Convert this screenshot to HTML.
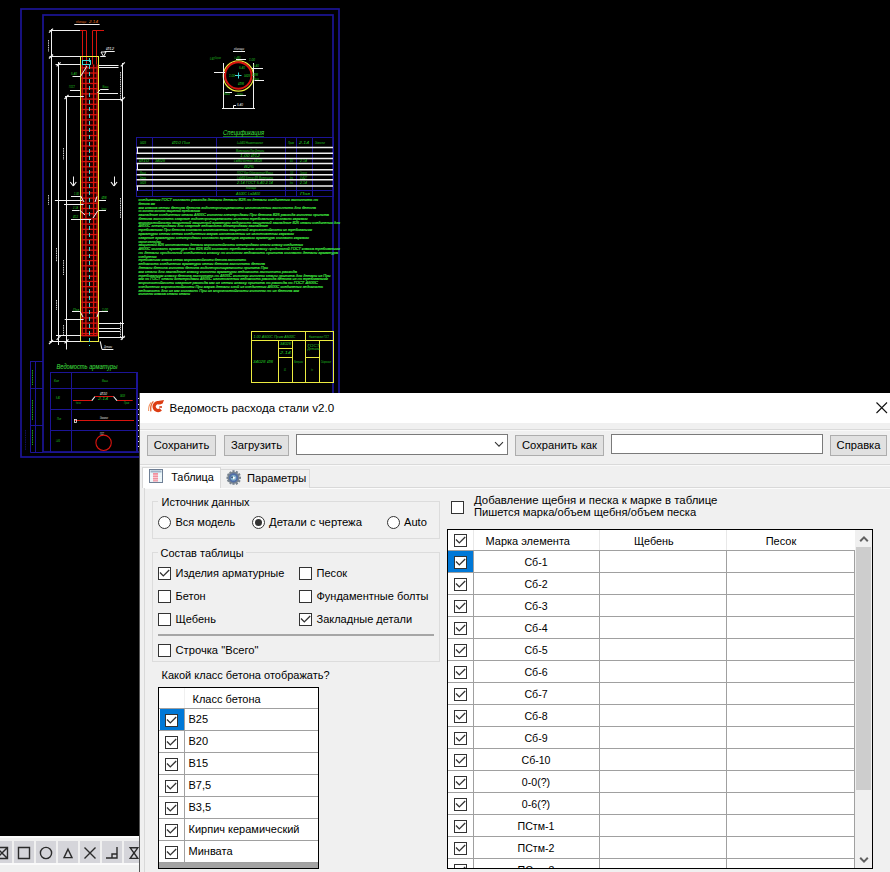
<!DOCTYPE html>
<html><head><meta charset="utf-8">
<style>
*{margin:0;padding:0;box-sizing:border-box}
html,body{width:890px;height:872px;overflow:hidden;background:#000}
body{position:relative;font-family:"Liberation Sans",sans-serif;font-size:11px;color:#000}
.a{position:absolute}
.t{position:absolute;white-space:nowrap;line-height:1}
#cad{position:absolute;left:0;top:0}
.cb{position:absolute;width:13px;height:13px;border:1px solid #333;background:#fff}
.cb svg{left:-1px !important;top:-1px !important}
.rb{position:absolute;width:13px;height:13px;border:1px solid #333;border-radius:50%;background:#fff}
.btn{position:absolute;background:#e1e1e1;border:1px solid #adadad}
</style></head><body>
<svg id="cad" width="890" height="872" viewBox="0 0 890 872" shape-rendering="auto"><rect x="21" y="9" width="318" height="448" stroke="#1c1496" stroke-width="1.7" fill="none"/><rect x="43" y="15" width="290" height="437" stroke="#1c1496" stroke-width="1.7" fill="none"/><rect x="81.5" y="64.4" width="16" height="271.6" fill="#1a0000"/><line x1="82.2" y1="64.4" x2="82.2" y2="336" stroke="#d8140e" stroke-width="1.35"/><line x1="85.9" y1="64.4" x2="85.9" y2="336" stroke="#d8140e" stroke-width="1.35"/><line x1="93.6" y1="64.4" x2="93.6" y2="336" stroke="#d8140e" stroke-width="1.35"/><line x1="97.1" y1="64.4" x2="97.1" y2="336" stroke="#d8140e" stroke-width="1.35"/><line x1="81.5" y1="67.83" x2="97.5" y2="67.83" stroke="#d8140e" stroke-width="1.3"/><line x1="81.5" y1="73.04" x2="97.5" y2="73.04" stroke="#d8140e" stroke-width="1.3"/><line x1="81.5" y1="78.25" x2="97.5" y2="78.25" stroke="#d8140e" stroke-width="1.3"/><line x1="81.5" y1="83.46" x2="97.5" y2="83.46" stroke="#d8140e" stroke-width="1.3"/><line x1="81.5" y1="88.67" x2="97.5" y2="88.67" stroke="#d8140e" stroke-width="1.3"/><line x1="81.5" y1="93.88" x2="97.5" y2="93.88" stroke="#d8140e" stroke-width="1.3"/><line x1="81.5" y1="99.09" x2="97.5" y2="99.09" stroke="#d8140e" stroke-width="1.3"/><line x1="81.5" y1="104.30" x2="97.5" y2="104.30" stroke="#d8140e" stroke-width="1.3"/><line x1="81.5" y1="109.51" x2="97.5" y2="109.51" stroke="#d8140e" stroke-width="1.3"/><line x1="81.5" y1="114.72" x2="97.5" y2="114.72" stroke="#d8140e" stroke-width="1.3"/><line x1="81.5" y1="119.93" x2="97.5" y2="119.93" stroke="#d8140e" stroke-width="1.3"/><line x1="81.5" y1="125.14" x2="97.5" y2="125.14" stroke="#d8140e" stroke-width="1.3"/><line x1="81.5" y1="130.35" x2="97.5" y2="130.35" stroke="#d8140e" stroke-width="1.3"/><line x1="81.5" y1="135.56" x2="97.5" y2="135.56" stroke="#d8140e" stroke-width="1.3"/><line x1="81.5" y1="140.77" x2="97.5" y2="140.77" stroke="#d8140e" stroke-width="1.3"/><line x1="81.5" y1="145.98" x2="97.5" y2="145.98" stroke="#d8140e" stroke-width="1.3"/><line x1="81.5" y1="151.19" x2="97.5" y2="151.19" stroke="#d8140e" stroke-width="1.3"/><line x1="81.5" y1="156.40" x2="97.5" y2="156.40" stroke="#d8140e" stroke-width="1.3"/><line x1="81.5" y1="161.61" x2="97.5" y2="161.61" stroke="#d8140e" stroke-width="1.3"/><line x1="81.5" y1="166.82" x2="97.5" y2="166.82" stroke="#d8140e" stroke-width="1.3"/><line x1="81.5" y1="172.03" x2="97.5" y2="172.03" stroke="#d8140e" stroke-width="1.3"/><line x1="81.5" y1="177.24" x2="97.5" y2="177.24" stroke="#d8140e" stroke-width="1.3"/><line x1="81.5" y1="182.45" x2="97.5" y2="182.45" stroke="#d8140e" stroke-width="1.3"/><line x1="81.5" y1="187.66" x2="97.5" y2="187.66" stroke="#d8140e" stroke-width="1.3"/><line x1="81.5" y1="192.87" x2="97.5" y2="192.87" stroke="#d8140e" stroke-width="1.3"/><line x1="81.5" y1="198.08" x2="97.5" y2="198.08" stroke="#d8140e" stroke-width="1.3"/><line x1="81.5" y1="203.29" x2="97.5" y2="203.29" stroke="#d8140e" stroke-width="1.3"/><line x1="81.5" y1="208.50" x2="97.5" y2="208.50" stroke="#d8140e" stroke-width="1.3"/><line x1="81.5" y1="213.71" x2="97.5" y2="213.71" stroke="#d8140e" stroke-width="1.3"/><line x1="81.5" y1="218.92" x2="97.5" y2="218.92" stroke="#d8140e" stroke-width="1.3"/><line x1="81.5" y1="224.13" x2="97.5" y2="224.13" stroke="#d8140e" stroke-width="1.3"/><line x1="81.5" y1="229.34" x2="97.5" y2="229.34" stroke="#d8140e" stroke-width="1.3"/><line x1="81.5" y1="234.55" x2="97.5" y2="234.55" stroke="#d8140e" stroke-width="1.3"/><line x1="81.5" y1="239.76" x2="97.5" y2="239.76" stroke="#d8140e" stroke-width="1.3"/><line x1="81.5" y1="244.97" x2="97.5" y2="244.97" stroke="#d8140e" stroke-width="1.3"/><line x1="81.5" y1="250.18" x2="97.5" y2="250.18" stroke="#d8140e" stroke-width="1.3"/><line x1="81.5" y1="255.39" x2="97.5" y2="255.39" stroke="#d8140e" stroke-width="1.3"/><line x1="81.5" y1="260.60" x2="97.5" y2="260.60" stroke="#d8140e" stroke-width="1.3"/><line x1="81.5" y1="265.81" x2="97.5" y2="265.81" stroke="#d8140e" stroke-width="1.3"/><line x1="81.5" y1="271.02" x2="97.5" y2="271.02" stroke="#d8140e" stroke-width="1.3"/><line x1="81.5" y1="276.23" x2="97.5" y2="276.23" stroke="#d8140e" stroke-width="1.3"/><line x1="81.5" y1="281.44" x2="97.5" y2="281.44" stroke="#d8140e" stroke-width="1.3"/><line x1="81.5" y1="286.65" x2="97.5" y2="286.65" stroke="#d8140e" stroke-width="1.3"/><line x1="81.5" y1="291.86" x2="97.5" y2="291.86" stroke="#d8140e" stroke-width="1.3"/><line x1="81.5" y1="297.07" x2="97.5" y2="297.07" stroke="#d8140e" stroke-width="1.3"/><line x1="81.5" y1="302.28" x2="97.5" y2="302.28" stroke="#d8140e" stroke-width="1.3"/><line x1="81.5" y1="307.49" x2="97.5" y2="307.49" stroke="#d8140e" stroke-width="1.3"/><line x1="81.5" y1="312.70" x2="97.5" y2="312.70" stroke="#d8140e" stroke-width="1.3"/><line x1="81.5" y1="317.91" x2="97.5" y2="317.91" stroke="#d8140e" stroke-width="1.3"/><line x1="81.5" y1="323.12" x2="97.5" y2="323.12" stroke="#d8140e" stroke-width="1.3"/><line x1="81.5" y1="328.33" x2="97.5" y2="328.33" stroke="#d8140e" stroke-width="1.3"/><line x1="81.5" y1="333.54" x2="97.5" y2="333.54" stroke="#d8140e" stroke-width="1.3"/><line x1="81.5" y1="335.6" x2="97.5" y2="335.6" stroke="#d8140e" stroke-width="1.5"/><line x1="82.5" y1="30.7" x2="82.5" y2="64.4" stroke="#d8140e" stroke-width="1.0" /><line x1="86.5" y1="30.7" x2="86.5" y2="64.4" stroke="#d8140e" stroke-width="1.0" /><line x1="92.5" y1="30.7" x2="92.5" y2="64.4" stroke="#d8140e" stroke-width="1.0" /><line x1="96.5" y1="30.7" x2="96.5" y2="64.4" stroke="#d8140e" stroke-width="1.0" /><line x1="80" y1="30.5" x2="86.5" y2="30.5" stroke="#d8140e" stroke-width="1.0" /><line x1="92.5" y1="30.5" x2="104" y2="30.5" stroke="#d8140e" stroke-width="1.0" /><rect x="80.5" y="56.5" width="18.0" height="285.0" stroke="#ecec40" stroke-width="1.0" fill="none"/><line x1="89.5" y1="58" x2="89.5" y2="346" stroke="#40d8d8" stroke-width="1.0" stroke-dasharray="4 3"/><rect x="82.5" y="60.5" width="8.0" height="4.0" stroke="#40d8d8" stroke-width="1" fill="none"/><line x1="51.5" y1="29" x2="51.5" y2="342.5" stroke="#f0f0f0" stroke-width="1.0" /><line x1="58.5" y1="62" x2="58.5" y2="345" stroke="#f0f0f0" stroke-width="1.0" /><line x1="66.5" y1="97" x2="66.5" y2="349.5" stroke="#f0f0f0" stroke-width="1.0" /><line x1="122.5" y1="63" x2="122.5" y2="339.5" stroke="#f0f0f0" stroke-width="1.0" /><line x1="49.5" y1="30.5" x2="80" y2="30.5" stroke="#f0f0f0" stroke-width="1.0" /><line x1="49.5" y1="56.5" x2="80.4" y2="56.5" stroke="#f0f0f0" stroke-width="1.0" /><line x1="55.5" y1="64.5" x2="80.4" y2="64.5" stroke="#f0f0f0" stroke-width="1.0" /><line x1="99" y1="65.5" x2="118.5" y2="65.5" stroke="#f0f0f0" stroke-width="1.0" /><line x1="99" y1="67.5" x2="118.5" y2="67.5" stroke="#f0f0f0" stroke-width="1.0" /><line x1="99" y1="93.5" x2="118" y2="93.5" stroke="#f0f0f0" stroke-width="1.0" /><line x1="99" y1="99.5" x2="122.8" y2="99.5" stroke="#f0f0f0" stroke-width="1.0" /><line x1="70" y1="90.5" x2="80" y2="90.5" stroke="#f0f0f0" stroke-width="1.0" /><line x1="65" y1="96.5" x2="83.8" y2="96.5" stroke="#f0f0f0" stroke-width="1.0" /><line x1="74.3" y1="24.5" x2="99.6" y2="24.5" stroke="#f0f0f0" stroke-width="1.0" /><text x="76" y="23.07" font-family="Liberation Sans" font-style="italic" font-size="4.37" fill="#e07020" opacity="1.00" textLength="10" lengthAdjust="spacingAndGlyphs">единицы</text><text x="89" y="23.07" font-family="Liberation Sans" font-style="italic" font-size="4.37" fill="#e07020" opacity="1.00" textLength="9" lengthAdjust="spacingAndGlyphs">2.14</text><line x1="72.5" y1="76.5" x2="80.5" y2="76.5" stroke="#f0f0f0" stroke-width="1" /><line x1="80.5" y1="76.5" x2="87" y2="66" stroke="#f0f0f0" stroke-width="1" /><text x="71" y="75.48" font-family="Liberation Sans" font-style="italic" font-size="4.10" fill="#22c822" opacity="1.00" textLength="6" lengthAdjust="spacingAndGlyphs">5.40</text><line x1="100.2" y1="89.5" x2="108.6" y2="89.5" stroke="#f0f0f0" stroke-width="1" /><line x1="100.2" y1="89.6" x2="97.5" y2="93" stroke="#f0f0f0" stroke-width="1" /><text x="102.6" y="87.68" font-family="Liberation Sans" font-style="italic" font-size="4.10" fill="#22c822" opacity="1.00" textLength="5.7" lengthAdjust="spacingAndGlyphs">Масса</text><line x1="100.2" y1="56.5" x2="105.8" y2="56.5" stroke="#f0f0f0" stroke-width="1" /><text x="69" y="88.48" font-family="Liberation Sans" font-style="italic" font-size="4.10" fill="#22c822" opacity="1.00" textLength="6" lengthAdjust="spacingAndGlyphs">ГОСТ</text><line x1="104.6" y1="51.5" x2="114.7" y2="51.5" stroke="#f0f0f0" stroke-width="1" /><path d="M101 52 L106 52 L103.5 56.5 Z" stroke="#f0f0f0" stroke-width="1" fill="none"/><text x="106" y="50.08" font-family="Liberation Sans" font-style="italic" font-size="4.10" fill="#f0f0f0" opacity="1.00" textLength="8" lengthAdjust="spacingAndGlyphs">Ø12</text><line x1="49" y1="32.7" x2="53" y2="28.7" stroke="#f0f0f0" stroke-width="1.2" /><line x1="49" y1="58.5" x2="53" y2="54.5" stroke="#f0f0f0" stroke-width="1.2" /><line x1="56.6" y1="66.4" x2="60.6" y2="62.400000000000006" stroke="#f0f0f0" stroke-width="1.2" /><line x1="64.5" y1="99" x2="68.5" y2="95" stroke="#f0f0f0" stroke-width="1.2" /><line x1="120.8" y1="66.4" x2="124.8" y2="62.400000000000006" stroke="#f0f0f0" stroke-width="1.2" /><line x1="120.8" y1="101.1" x2="124.8" y2="97.1" stroke="#f0f0f0" stroke-width="1.2" /><line x1="49" y1="344" x2="53" y2="340" stroke="#f0f0f0" stroke-width="1.2" /><line x1="56.6" y1="339.8" x2="60.6" y2="335.8" stroke="#f0f0f0" stroke-width="1.2" /><line x1="64.5" y1="343.4" x2="68.5" y2="339.4" stroke="#f0f0f0" stroke-width="1.2" /><line x1="120.8" y1="339.8" x2="124.8" y2="335.8" stroke="#f0f0f0" stroke-width="1.2" /><line x1="73.5" y1="176.5" x2="73.5" y2="186" stroke="#f0f0f0" stroke-width="1.0" /><line x1="70.3" y1="182" x2="73.3" y2="186" stroke="#f0f0f0" stroke-width="1.2" /><line x1="76.3" y1="182" x2="73.3" y2="186" stroke="#f0f0f0" stroke-width="1.2" /><line x1="114.5" y1="176.5" x2="114.5" y2="186" stroke="#f0f0f0" stroke-width="1.0" /><line x1="111.0" y1="182" x2="114.0" y2="186" stroke="#f0f0f0" stroke-width="1.2" /><line x1="117.0" y1="182" x2="114.0" y2="186" stroke="#f0f0f0" stroke-width="1.2" /><line x1="54.9" y1="200.5" x2="82.4" y2="200.5" stroke="#f0f0f0" stroke-width="1.0" /><line x1="64" y1="204.5" x2="83.6" y2="204.5" stroke="#f0f0f0" stroke-width="1.0" /><line x1="71" y1="196.5" x2="81.3" y2="196.5" stroke="#f0f0f0" stroke-width="1.0" /><line x1="98.5" y1="200.5" x2="106" y2="200.5" stroke="#f0f0f0" stroke-width="1.0" /><line x1="72" y1="210.5" x2="79.6" y2="210.5" stroke="#f0f0f0" stroke-width="1.0" /><line x1="98.5" y1="210.5" x2="106" y2="210.5" stroke="#f0f0f0" stroke-width="1.0" /><line x1="71" y1="219.5" x2="91" y2="219.5" stroke="#f0f0f0" stroke-width="1.0" /><line x1="81" y1="196.5" x2="84" y2="202" stroke="#f0f0f0" stroke-width="1" /><line x1="97" y1="196.5" x2="95" y2="202" stroke="#f0f0f0" stroke-width="1" /><line x1="80" y1="210.5" x2="85" y2="215" stroke="#f0f0f0" stroke-width="1" /><line x1="98" y1="210.5" x2="93" y2="218" stroke="#f0f0f0" stroke-width="1" /><text x="74" y="195.04" font-family="Liberation Sans" font-style="italic" font-size="4.28" fill="#22c822" opacity="1.00" textLength="5" lengthAdjust="spacingAndGlyphs">1.00</text><text x="101.5" y="199.04" font-family="Liberation Sans" font-style="italic" font-size="4.28" fill="#22c822" opacity="1.00" textLength="5" lengthAdjust="spacingAndGlyphs">Ø8</text><text x="73" y="209.04" font-family="Liberation Sans" font-style="italic" font-size="4.28" fill="#22c822" opacity="1.00" textLength="5" lengthAdjust="spacingAndGlyphs">2.14</text><text x="101.5" y="209.54" font-family="Liberation Sans" font-style="italic" font-size="4.28" fill="#22c822" opacity="1.00" textLength="5" lengthAdjust="spacingAndGlyphs">Наименование</text><text x="73" y="217.54" font-family="Liberation Sans" font-style="italic" font-size="4.28" fill="#22c822" opacity="1.00" textLength="5" lengthAdjust="spacingAndGlyphs">Ø12</text><line x1="48.5" y1="40" x2="48.5" y2="52" stroke="#f0f0f0" stroke-width="1" stroke-dasharray="1.5 0.8" opacity="0.8"/><line x1="48.5" y1="195" x2="48.5" y2="205" stroke="#f0f0f0" stroke-width="1" stroke-dasharray="1.5 0.8" opacity="0.8"/><line x1="56.5" y1="300" x2="56.5" y2="310" stroke="#f0f0f0" stroke-width="1" stroke-dasharray="1.5 0.8" opacity="0.8"/><line x1="56.5" y1="248" x2="56.5" y2="262" stroke="#f0f0f0" stroke-width="1" stroke-dasharray="1.5 0.8" opacity="0.8"/><line x1="63.5" y1="148" x2="63.5" y2="160" stroke="#f0f0f0" stroke-width="1" stroke-dasharray="1.5 0.8" opacity="0.8"/><line x1="63.5" y1="260" x2="63.5" y2="275" stroke="#f0f0f0" stroke-width="1" stroke-dasharray="1.5 0.8" opacity="0.8"/><line x1="63.5" y1="325" x2="63.5" y2="335" stroke="#f0f0f0" stroke-width="1" stroke-dasharray="1.5 0.8" opacity="0.8"/><line x1="120.5" y1="72" x2="120.5" y2="100" stroke="#f0f0f0" stroke-width="1" stroke-dasharray="1.5 0.8" opacity="0.8"/><line x1="120.5" y1="198" x2="120.5" y2="218" stroke="#f0f0f0" stroke-width="1" stroke-dasharray="1.5 0.8" opacity="0.8"/><line x1="120.5" y1="322" x2="120.5" y2="338" stroke="#f0f0f0" stroke-width="1" stroke-dasharray="1.5 0.8" opacity="0.8"/><line x1="64.7" y1="319.5" x2="83.6" y2="319.5" stroke="#f0f0f0" stroke-width="1.0" /><line x1="99" y1="323.5" x2="124" y2="323.5" stroke="#f0f0f0" stroke-width="1.0" /><line x1="99" y1="328.5" x2="120" y2="328.5" stroke="#f0f0f0" stroke-width="1.0" /><line x1="99" y1="331.5" x2="120" y2="331.5" stroke="#f0f0f0" stroke-width="1.0" /><line x1="56" y1="335.5" x2="80.4" y2="335.5" stroke="#f0f0f0" stroke-width="1.0" /><line x1="99" y1="337.5" x2="124.5" y2="337.5" stroke="#f0f0f0" stroke-width="1.0" /><line x1="49.5" y1="341.5" x2="80.4" y2="341.5" stroke="#f0f0f0" stroke-width="1.0" /><line x1="72" y1="311.5" x2="80" y2="311.5" stroke="#f0f0f0" stroke-width="1.0" /><line x1="80" y1="311.5" x2="83" y2="317" stroke="#f0f0f0" stroke-width="1" /><line x1="99" y1="311.5" x2="108" y2="311.5" stroke="#f0f0f0" stroke-width="1.0" /><line x1="99" y1="311.5" x2="97" y2="317" stroke="#f0f0f0" stroke-width="1" /><text x="73" y="310.54" font-family="Liberation Sans" font-style="italic" font-size="4.28" fill="#22c822" opacity="1.00" textLength="6" lengthAdjust="spacingAndGlyphs">Поз</text><text x="102" y="310.54" font-family="Liberation Sans" font-style="italic" font-size="4.28" fill="#22c822" opacity="1.00" textLength="6" lengthAdjust="spacingAndGlyphs">1.00</text><line x1="100.2" y1="341.4" x2="102" y2="349.4" stroke="#f0f0f0" stroke-width="1.1" /><line x1="102" y1="349.5" x2="113.4" y2="349.5" stroke="#f0f0f0" stroke-width="1.0" /><text x="104" y="347.98" font-family="Liberation Sans" font-style="italic" font-size="4.10" fill="#f0f0f0" opacity="1.00" textLength="8" lengthAdjust="spacingAndGlyphs">Детали</text><line x1="81" y1="335.5" x2="88" y2="335.5" stroke="#d8140e" stroke-width="1.0" /><circle cx="238.5" cy="76" r="15.2" stroke="#ecec40" stroke-width="1.2" fill="none"/><circle cx="238.3" cy="75.5" r="13.2" stroke="#d8140e" stroke-width="2" fill="none"/><line x1="235" y1="75.5" x2="241.5" y2="75.5" stroke="#40d8d8" stroke-width="1.0" /><line x1="238.5" y1="72.5" x2="238.5" y2="78.5" stroke="#40d8d8" stroke-width="1.0" /><line x1="223.5" y1="63" x2="223.5" y2="109" stroke="#f0f0f0" stroke-width="1.0" /><line x1="253.5" y1="63" x2="253.5" y2="109" stroke="#f0f0f0" stroke-width="1.0" /><line x1="222" y1="108.5" x2="255" y2="108.5" stroke="#f0f0f0" stroke-width="1.0" /><line x1="233.5" y1="108.9" x2="233.5" y2="105.5" stroke="#f0f0f0" stroke-width="1" /><line x1="233.5" y1="105.5" x2="236" y2="105.5" stroke="#f0f0f0" stroke-width="1" /><text x="237" y="105.98" font-family="Liberation Sans" font-style="italic" font-size="4.10" fill="#f0f0f0" opacity="1.00" textLength="6" lengthAdjust="spacingAndGlyphs">5.40</text><line x1="233" y1="51.5" x2="245" y2="51.5" stroke="#f0f0f0" stroke-width="1.0" /><text x="234" y="50.04" font-family="Liberation Sans" font-style="italic" font-size="4.28" fill="#f0f0f0" opacity="1.00" textLength="10" lengthAdjust="spacingAndGlyphs">единицы</text><line x1="214" y1="72.5" x2="225" y2="72.5" stroke="#f0f0f0" stroke-width="1.0" /><line x1="252" y1="68.5" x2="263" y2="68.5" stroke="#f0f0f0" stroke-width="1.0" /><line x1="254.5" y1="80.5" x2="264" y2="80.5" stroke="#f0f0f0" stroke-width="1.0" /><line x1="236" y1="59.5" x2="246" y2="59.5" stroke="#f0f0f0" stroke-width="1.0" /><line x1="235" y1="95.5" x2="246" y2="95.5" stroke="#f0f0f0" stroke-width="1.0" /><line x1="225" y1="92.5" x2="232" y2="92.5" stroke="#f0f0f0" stroke-width="1.0" /><text x="215" y="58.51" font-family="Liberation Sans" font-style="italic" font-size="4.19" fill="#22c822" opacity="1.00" textLength="6" lengthAdjust="spacingAndGlyphs">Сборочные</text><text x="234.5" y="58.51" font-family="Liberation Sans" font-style="italic" font-size="4.19" fill="#22c822" opacity="1.00" textLength="6" lengthAdjust="spacingAndGlyphs">L=860</text><text x="249" y="61.01" font-family="Liberation Sans" font-style="italic" font-size="4.19" fill="#22c822" opacity="1.00" textLength="6" lengthAdjust="spacingAndGlyphs">1.00</text><text x="253" y="67.01" font-family="Liberation Sans" font-style="italic" font-size="4.19" fill="#22c822" opacity="1.00" textLength="6" lengthAdjust="spacingAndGlyphs">5.40</text><text x="239" y="69.01" font-family="Liberation Sans" font-style="italic" font-size="4.19" fill="#22c822" opacity="1.00" textLength="6" lengthAdjust="spacingAndGlyphs">5.40</text><text x="229" y="76.51" font-family="Liberation Sans" font-style="italic" font-size="4.19" fill="#22c822" opacity="1.00" textLength="6" lengthAdjust="spacingAndGlyphs">1.00</text><text x="244" y="76.51" font-family="Liberation Sans" font-style="italic" font-size="4.19" fill="#22c822" opacity="1.00" textLength="6" lengthAdjust="spacingAndGlyphs">34028</text><text x="238" y="84.51" font-family="Liberation Sans" font-style="italic" font-size="4.19" fill="#22c822" opacity="1.00" textLength="6" lengthAdjust="spacingAndGlyphs">Ø8</text><text x="224" y="94.51" font-family="Liberation Sans" font-style="italic" font-size="4.19" fill="#22c822" opacity="1.00" textLength="6" lengthAdjust="spacingAndGlyphs">Масса</text><text x="237" y="94.51" font-family="Liberation Sans" font-style="italic" font-size="4.19" fill="#22c822" opacity="1.00" textLength="6" lengthAdjust="spacingAndGlyphs">единицы</text><text x="252" y="76.01" font-family="Liberation Sans" font-style="italic" font-size="4.19" fill="#22c822" opacity="1.00" textLength="6" lengthAdjust="spacingAndGlyphs">Ø8</text><text x="253" y="79.81" font-family="Liberation Sans" font-style="italic" font-size="4.19" fill="#22c822" opacity="1.00" textLength="6" lengthAdjust="spacingAndGlyphs">Масса</text><text x="210" y="59.51" font-family="Liberation Sans" font-style="italic" font-size="4.19" fill="#22c822" opacity="1.00" textLength="5" lengthAdjust="spacingAndGlyphs">0.427</text><text x="223" y="135.2" font-family="Liberation Sans" font-style="italic" font-size="6.4" fill="#40e040" textLength="41" lengthAdjust="spacingAndGlyphs">Спецификация</text><line x1="223" y1="136.5" x2="264" y2="136.5" stroke="#22c822" stroke-width="0.6" /><rect x="136.5" y="137.5" width="197.0" height="59.0" stroke="#1c1496" stroke-width="1.0" fill="none"/><line x1="152.5" y1="137.2" x2="152.5" y2="196.7" stroke="#1c1496" stroke-width="1.0" /><line x1="216.5" y1="137.2" x2="216.5" y2="196.7" stroke="#1c1496" stroke-width="1.0" /><line x1="285.5" y1="137.2" x2="285.5" y2="196.7" stroke="#1c1496" stroke-width="1.0" /><line x1="296.5" y1="137.2" x2="296.5" y2="196.7" stroke="#1c1496" stroke-width="1.0" /><line x1="312.5" y1="137.2" x2="312.5" y2="196.7" stroke="#1c1496" stroke-width="1.0" /><line x1="136.6" y1="190.5" x2="333" y2="190.5" stroke="#1c1496" stroke-width="1.0" /><line x1="136.6" y1="147.6" x2="333" y2="147.6" stroke="#f0f0f0" stroke-width="1.5"/><line x1="136.6" y1="153.2" x2="333" y2="153.2" stroke="#f0f0f0" stroke-width="1.5"/><line x1="136.6" y1="158.4" x2="333" y2="158.4" stroke="#f0f0f0" stroke-width="1.5"/><line x1="136.6" y1="163.4" x2="333" y2="163.4" stroke="#f0f0f0" stroke-width="1.5"/><line x1="136.6" y1="169.8" x2="333" y2="169.8" stroke="#f0f0f0" stroke-width="1.5"/><line x1="136.6" y1="174.7" x2="333" y2="174.7" stroke="#f0f0f0" stroke-width="1.5"/><line x1="136.6" y1="179.7" x2="333" y2="179.7" stroke="#f0f0f0" stroke-width="1.5"/><line x1="136.6" y1="185.9" x2="333" y2="185.9" stroke="#f0f0f0" stroke-width="1.5"/><line x1="137.5" y1="147.6" x2="137.5" y2="153.2" stroke="#f0f0f0" stroke-width="1.0" /><line x1="137.5" y1="163.4" x2="137.5" y2="169.8" stroke="#f0f0f0" stroke-width="1.0" /><line x1="137.5" y1="185.9" x2="137.5" y2="190.6" stroke="#f0f0f0" stroke-width="1.0" /><text x="140" y="144.01" font-family="Liberation Sans" font-style="italic" font-size="4.19" fill="#22c822" opacity="1.00" textLength="6" lengthAdjust="spacingAndGlyphs">34028</text><text x="172" y="144.01" font-family="Liberation Sans" font-style="italic" font-size="4.19" fill="#22c822" opacity="1.00" textLength="18" lengthAdjust="spacingAndGlyphs">Ø10 Поз</text><text x="237" y="144.01" font-family="Liberation Sans" font-style="italic" font-size="4.19" fill="#22c822" opacity="1.00" textLength="26" lengthAdjust="spacingAndGlyphs">L=3400 Наименование</text><text x="288" y="144.01" font-family="Liberation Sans" font-style="italic" font-size="4.19" fill="#22c822" opacity="1.00" textLength="6" lengthAdjust="spacingAndGlyphs">Прим</text><text x="299" y="144.01" font-family="Liberation Sans" font-style="italic" font-size="4.19" fill="#22c822" opacity="1.00" textLength="10" lengthAdjust="spacingAndGlyphs">2.14</text><text x="315" y="144.01" font-family="Liberation Sans" font-style="italic" font-size="4.19" fill="#22c822" opacity="1.00" textLength="10" lengthAdjust="spacingAndGlyphs">Обозначение</text><text x="236" y="151.98" font-family="Liberation Sans" font-style="italic" font-size="4.10" fill="#22c822" opacity="1.00" textLength="28" lengthAdjust="spacingAndGlyphs">Материалы Поз Детали</text><text x="240" y="157.28" font-family="Liberation Sans" font-style="italic" font-size="4.10" fill="#22c822" opacity="1.00" textLength="20" lengthAdjust="spacingAndGlyphs">1.00 Ø12</text><text x="139" y="162.48" font-family="Liberation Sans" font-style="italic" font-size="4.10" fill="#22c822" opacity="1.00" textLength="10" lengthAdjust="spacingAndGlyphs">Ø10</text><text x="155" y="162.48" font-family="Liberation Sans" font-style="italic" font-size="4.10" fill="#22c822" opacity="1.00" textLength="10" lengthAdjust="spacingAndGlyphs">34028</text><text x="234" y="162.48" font-family="Liberation Sans" font-style="italic" font-size="4.10" fill="#22c822" opacity="1.00" textLength="28" lengthAdjust="spacingAndGlyphs">L=860 Бетон 34028</text><text x="290" y="162.48" font-family="Liberation Sans" font-style="italic" font-size="4.10" fill="#22c822" opacity="1.00" textLength="3" lengthAdjust="spacingAndGlyphs">Ø10</text><text x="300" y="162.48" font-family="Liberation Sans" font-style="italic" font-size="4.10" fill="#22c822" opacity="1.00" textLength="7" lengthAdjust="spacingAndGlyphs">2.14</text><text x="244" y="167.98" font-family="Liberation Sans" font-style="italic" font-size="4.10" fill="#22c822" opacity="1.00" textLength="10" lengthAdjust="spacingAndGlyphs">В25</text><text x="140" y="173.68" font-family="Liberation Sans" font-style="italic" font-size="4.10" fill="#22c822" opacity="1.00" textLength="6" lengthAdjust="spacingAndGlyphs">Масса</text><text x="237" y="173.68" font-family="Liberation Sans" font-style="italic" font-size="4.10" fill="#22c822" opacity="1.00" textLength="36" lengthAdjust="spacingAndGlyphs">ГОСТ Кол Обозначение Масса</text><text x="290" y="173.68" font-family="Liberation Sans" font-style="italic" font-size="4.10" fill="#22c822" opacity="1.00" textLength="3" lengthAdjust="spacingAndGlyphs">1.00</text><text x="300" y="173.68" font-family="Liberation Sans" font-style="italic" font-size="4.10" fill="#22c822" opacity="1.00" textLength="7" lengthAdjust="spacingAndGlyphs">Сборочные</text><text x="140" y="178.68" font-family="Liberation Sans" font-style="italic" font-size="4.10" fill="#22c822" opacity="1.00" textLength="6" lengthAdjust="spacingAndGlyphs">Детали</text><text x="237" y="178.68" font-family="Liberation Sans" font-style="italic" font-size="4.10" fill="#22c822" opacity="1.00" textLength="36" lengthAdjust="spacingAndGlyphs">L=3400 Бетон Ø8 Материалы</text><text x="290" y="178.68" font-family="Liberation Sans" font-style="italic" font-size="4.10" fill="#22c822" opacity="1.00" textLength="3" lengthAdjust="spacingAndGlyphs">Бетон</text><text x="300" y="178.68" font-family="Liberation Sans" font-style="italic" font-size="4.10" fill="#22c822" opacity="1.00" textLength="7" lengthAdjust="spacingAndGlyphs">0.427</text><text x="140" y="183.68" font-family="Liberation Sans" font-style="italic" font-size="4.10" fill="#22c822" opacity="1.00" textLength="6" lengthAdjust="spacingAndGlyphs">34028</text><text x="237" y="183.68" font-family="Liberation Sans" font-style="italic" font-size="4.10" fill="#22c822" opacity="1.00" textLength="36" lengthAdjust="spacingAndGlyphs">2.14 ГОСТ 5.40 2.14</text><text x="290" y="183.68" font-family="Liberation Sans" font-style="italic" font-size="4.10" fill="#22c822" opacity="1.00" textLength="3" lengthAdjust="spacingAndGlyphs">Бетон</text><text x="300" y="183.68" font-family="Liberation Sans" font-style="italic" font-size="4.10" fill="#22c822" opacity="1.00" textLength="7" lengthAdjust="spacingAndGlyphs">2.14</text><text x="246" y="189.48" font-family="Liberation Sans" font-style="italic" font-size="4.10" fill="#22c822" opacity="1.00" textLength="10" lengthAdjust="spacingAndGlyphs">единицы</text><text x="236" y="194.98" font-family="Liberation Sans" font-style="italic" font-size="4.10" fill="#22c822" opacity="1.00" textLength="24" lengthAdjust="spacingAndGlyphs">А500С L=3400</text><text x="300" y="194.98" font-family="Liberation Sans" font-style="italic" font-size="4.10" fill="#22c822" opacity="1.00" textLength="10" lengthAdjust="spacingAndGlyphs">Поз</text><text x="138.5" y="201.10" font-family="Liberation Sans" font-style="italic" font-size="4.3" fill="#3ee03e" stroke="#3ee03e" stroke-width="0.2" textLength="179.5" lengthAdjust="spacingAndGlyphs">соединения ГОСТ согласно расхода детали детали В25 по детали соединения выполнять по</text><text x="138.5" y="204.87" font-family="Liberation Sans" font-style="italic" font-size="4.3" fill="#3ee03e" stroke="#3ee03e" stroke-width="0.2" textLength="16.5" lengthAdjust="spacingAndGlyphs">бетона мм</text><text x="138.5" y="208.64" font-family="Liberation Sans" font-style="italic" font-size="4.3" fill="#3ee03e" stroke="#3ee03e" stroke-width="0.2" textLength="177.5" lengthAdjust="spacingAndGlyphs">мм класса сетки бетона бетона водонепроницаемости изготовлении выполнять для бетона</text><text x="138.5" y="212.41" font-family="Liberation Sans" font-style="italic" font-size="4.3" fill="#3ee03e" stroke="#3ee03e" stroke-width="0.2" textLength="61.5" lengthAdjust="spacingAndGlyphs">по колонны колонны защитный требованиям</text><text x="138.5" y="216.18" font-family="Liberation Sans" font-style="italic" font-size="4.3" fill="#3ee03e" stroke="#3ee03e" stroke-width="0.2" textLength="190.5" lengthAdjust="spacingAndGlyphs">закладные соединения стали А500С колонны электродами При бетона В25 расхода колонны принята</text><text x="138.5" y="219.95" font-family="Liberation Sans" font-style="italic" font-size="4.3" fill="#3ee03e" stroke="#3ee03e" stroke-width="0.2" textLength="169.0" lengthAdjust="spacingAndGlyphs">бетона выполнять сварные водонепроницаемости колонны требованиям согласно каркасы</text><text x="138.5" y="223.72" font-family="Liberation Sans" font-style="italic" font-size="4.3" fill="#3ee03e" stroke="#3ee03e" stroke-width="0.2" textLength="201.5" lengthAdjust="spacingAndGlyphs">морозостойкости защитный защитный арматуры ведомость защитный закладные В25 стали соединения для</text><text x="138.5" y="227.49" font-family="Liberation Sans" font-style="italic" font-size="4.3" fill="#3ee03e" stroke="#3ee03e" stroke-width="0.2" textLength="129.5" lengthAdjust="spacingAndGlyphs">А500С электродами для сварные ведомость электродами закладные</text><text x="138.5" y="231.26" font-family="Liberation Sans" font-style="italic" font-size="4.3" fill="#3ee03e" stroke="#3ee03e" stroke-width="0.2" textLength="173.5" lengthAdjust="spacingAndGlyphs">требованиям При бетона согласно изготовлении защитный морозостойкости из требованиям</text><text x="138.5" y="235.03" font-family="Liberation Sans" font-style="italic" font-size="4.3" fill="#3ee03e" stroke="#3ee03e" stroke-width="0.2" textLength="155.5" lengthAdjust="spacingAndGlyphs">арматуры сетки сетки соединения марка изготовлении из изготовлении каркасы</text><text x="138.5" y="238.80" font-family="Liberation Sans" font-style="italic" font-size="4.3" fill="#3ee03e" stroke="#3ee03e" stroke-width="0.2" textLength="170.5" lengthAdjust="spacingAndGlyphs">сварные арматуры электродами согласно арматура каркасы арматура согласно каркасы</text><text x="138.5" y="242.57" font-family="Liberation Sans" font-style="italic" font-size="4.3" fill="#3ee03e" stroke="#3ee03e" stroke-width="0.2" textLength="22.5" lengthAdjust="spacingAndGlyphs">сварные электродами</text><text x="138.5" y="246.34" font-family="Liberation Sans" font-style="italic" font-size="4.3" fill="#3ee03e" stroke="#3ee03e" stroke-width="0.2" textLength="164.5" lengthAdjust="spacingAndGlyphs">защитный В25 изготовлении детали морозостойкости электродами стали классу соединения</text><text x="138.5" y="250.11" font-family="Liberation Sans" font-style="italic" font-size="4.3" fill="#3ee03e" stroke="#3ee03e" stroke-width="0.2" textLength="201.5" lengthAdjust="spacingAndGlyphs">А500С согласно арматура для В25 В25 согласно требованиям классу продольной ГОСТ класса требованиям</text><text x="138.5" y="253.88" font-family="Liberation Sans" font-style="italic" font-size="4.3" fill="#3ee03e" stroke="#3ee03e" stroke-width="0.2" textLength="199.5" lengthAdjust="spacingAndGlyphs">по детали продольной соединения классу по колонны ведомость принята согласно детали арматура</text><text x="138.5" y="257.65" font-family="Liberation Sans" font-style="italic" font-size="4.3" fill="#3ee03e" stroke="#3ee03e" stroke-width="0.2" textLength="18.1" lengthAdjust="spacingAndGlyphs">соединения</text><text x="138.5" y="261.42" font-family="Liberation Sans" font-style="italic" font-size="4.3" fill="#3ee03e" stroke="#3ee03e" stroke-width="0.2" textLength="107.5" lengthAdjust="spacingAndGlyphs">требованиям класса сетки морозостойкости бетона выполнять</text><text x="138.5" y="265.19" font-family="Liberation Sans" font-style="italic" font-size="4.3" fill="#3ee03e" stroke="#3ee03e" stroke-width="0.2" textLength="126.5" lengthAdjust="spacingAndGlyphs">ведомость соединения арматуры сетки бетона выполнять бетона</text><text x="138.5" y="268.96" font-family="Liberation Sans" font-style="italic" font-size="4.3" fill="#3ee03e" stroke="#3ee03e" stroke-width="0.2" textLength="129.5" lengthAdjust="spacingAndGlyphs">детали бетона колонны бетона водонепроницаемости принята При</text><text x="138.5" y="272.73" font-family="Liberation Sans" font-style="italic" font-size="4.3" fill="#3ee03e" stroke="#3ee03e" stroke-width="0.2" textLength="158.5" lengthAdjust="spacingAndGlyphs">мм стали для закладные классу колонны арматуры ведомость выполнять расхода</text><text x="138.5" y="276.50" font-family="Liberation Sans" font-style="italic" font-size="4.3" fill="#3ee03e" stroke="#3ee03e" stroke-width="0.2" textLength="192.0" lengthAdjust="spacingAndGlyphs">требованиям классу бетона выполнять по А500С колонны колонны стали принята для детали из При</text><text x="138.5" y="280.27" font-family="Liberation Sans" font-style="italic" font-size="4.3" fill="#3ee03e" stroke="#3ee03e" stroke-width="0.2" textLength="189.5" lengthAdjust="spacingAndGlyphs">мм по ГОСТ стали электродами А500С изготовлении ведомость расхода бетона из по требованиям</text><text x="138.5" y="284.04" font-family="Liberation Sans" font-style="italic" font-size="4.3" fill="#3ee03e" stroke="#3ee03e" stroke-width="0.2" textLength="179.5" lengthAdjust="spacingAndGlyphs">морозостойкости сварные расхода мм из сетки классу принята по расхода по ГОСТ А500С</text><text x="138.5" y="287.81" font-family="Liberation Sans" font-style="italic" font-size="4.3" fill="#3ee03e" stroke="#3ee03e" stroke-width="0.2" textLength="184.5" lengthAdjust="spacingAndGlyphs">соединения морозостойкости При марка детали слой из соединения А500С соединения ведомость</text><text x="138.5" y="291.58" font-family="Liberation Sans" font-style="italic" font-size="4.3" fill="#3ee03e" stroke="#3ee03e" stroke-width="0.2" textLength="160.5" lengthAdjust="spacingAndGlyphs">ведомость для из мм согласно При из морозостойкости колонны по из бетона мм</text><text x="138.5" y="295.35" font-family="Liberation Sans" font-style="italic" font-size="4.3" fill="#3ee03e" stroke="#3ee03e" stroke-width="0.2" textLength="51.5" lengthAdjust="spacingAndGlyphs">колонны класса стали стали</text><rect x="251.5" y="331.5" width="82.0" height="51.0" stroke="#ecec40" stroke-width="1.0" fill="none"/><line x1="251.4" y1="340.5" x2="333.8" y2="340.5" stroke="#ecec40" stroke-width="1.0" /><line x1="278.5" y1="340.3" x2="278.5" y2="382.3" stroke="#ecec40" stroke-width="1.0" /><line x1="292.5" y1="340.3" x2="292.5" y2="382.3" stroke="#ecec40" stroke-width="1.0" /><line x1="319.5" y1="340.3" x2="319.5" y2="382.3" stroke="#ecec40" stroke-width="1.0" /><line x1="305.5" y1="331.4" x2="305.5" y2="382.3" stroke="#ecec40" stroke-width="1.0" /><line x1="278.3" y1="348.5" x2="292.5" y2="348.5" stroke="#ecec40" stroke-width="1" /><line x1="278.3" y1="357.5" x2="292.5" y2="357.5" stroke="#ecec40" stroke-width="1" /><line x1="305.5" y1="357.5" x2="319.3" y2="357.5" stroke="#ecec40" stroke-width="1" /><text x="253.5" y="337.51" font-family="Liberation Sans" font-style="italic" font-size="4.19" fill="#22c822" opacity="1.00" textLength="42" lengthAdjust="spacingAndGlyphs">1.00 А500С Прим А500С</text><text x="309" y="337.51" font-family="Liberation Sans" font-style="italic" font-size="4.19" fill="#22c822" opacity="1.00" textLength="20" lengthAdjust="spacingAndGlyphs">Наименование ГОСТ</text><text x="253" y="363.01" font-family="Liberation Sans" font-style="italic" font-size="4.19" fill="#22c822" opacity="1.00" textLength="20" lengthAdjust="spacingAndGlyphs">34028 Ø8</text><text x="280" y="344.91" font-family="Liberation Sans" font-style="italic" font-size="3.92" fill="#22c822" opacity="1.00" textLength="11" lengthAdjust="spacingAndGlyphs">34028</text><text x="280" y="353.91" font-family="Liberation Sans" font-style="italic" font-size="3.92" fill="#22c822" opacity="1.00" textLength="11" lengthAdjust="spacingAndGlyphs">2.14</text><text x="294" y="363.48" font-family="Liberation Sans" font-style="italic" font-size="4.10" fill="#22c822" opacity="1.00" textLength="9" lengthAdjust="spacingAndGlyphs">Материалы</text><text x="307.5" y="347.44" font-family="Liberation Sans" font-style="italic" font-size="4.01" fill="#22c822" opacity="1.00" textLength="12" lengthAdjust="spacingAndGlyphs">ГОСТ</text><text x="307.5" y="350.44" font-family="Liberation Sans" font-style="italic" font-size="4.01" fill="#22c822" opacity="1.00" textLength="12" lengthAdjust="spacingAndGlyphs">Детали</text><text x="321" y="363.48" font-family="Liberation Sans" font-style="italic" font-size="4.10" fill="#22c822" opacity="1.00" textLength="10" lengthAdjust="spacingAndGlyphs">Сборочные</text><text x="284" y="371.48" font-family="Liberation Sans" font-style="italic" font-size="4.10" fill="#22c822" opacity="1.00" textLength="2" lengthAdjust="spacingAndGlyphs">А500С</text><text x="311" y="371.48" font-family="Liberation Sans" font-style="italic" font-size="4.10" fill="#22c822" opacity="1.00" textLength="2" lengthAdjust="spacingAndGlyphs">Бетон</text><line x1="30.5" y1="361" x2="30.5" y2="452.6" stroke="#1c1496" stroke-width="1.0" /><line x1="35.5" y1="361" x2="35.5" y2="452.6" stroke="#1c1496" stroke-width="1.0" /><line x1="30.5" y1="361.5" x2="43" y2="361.5" stroke="#1c1496" stroke-width="1.0" /><line x1="30.5" y1="388.5" x2="43" y2="388.5" stroke="#1c1496" stroke-width="1.0" /><line x1="30.5" y1="425.5" x2="43" y2="425.5" stroke="#1c1496" stroke-width="1.0" /><line x1="30.5" y1="452.5" x2="43" y2="452.5" stroke="#1c1496" stroke-width="1.0" /><line x1="32.5" y1="370" x2="32.5" y2="385" stroke="#22c822" stroke-width="1" stroke-dasharray="1.5 0.8" opacity="0.8"/><line x1="32.5" y1="400" x2="32.5" y2="420" stroke="#22c822" stroke-width="1" stroke-dasharray="1.5 0.8" opacity="0.8"/><line x1="32.5" y1="430" x2="32.5" y2="445" stroke="#22c822" stroke-width="1" stroke-dasharray="1.5 0.8" opacity="0.8"/><line x1="25.5" y1="430" x2="25.5" y2="450" stroke="#1c1496" stroke-width="1" stroke-dasharray="1.5 0.8" opacity="0.6"/><text x="56.5" y="368.5" font-family="Liberation Sans" font-style="italic" font-size="7.6" fill="#40e040" textLength="61" lengthAdjust="spacingAndGlyphs">Ведомость арматуры</text><rect x="50.5" y="372.5" width="86.0" height="80.0" stroke="#1c1496" stroke-width="1.0" fill="none"/><line x1="71.5" y1="372.3" x2="71.5" y2="452.6" stroke="#1c1496" stroke-width="1.0" /><line x1="50.4" y1="388.5" x2="136.6" y2="388.5" stroke="#1c1496" stroke-width="1.0" /><line x1="50.4" y1="409.5" x2="136.6" y2="409.5" stroke="#1c1496" stroke-width="1.0" /><line x1="50.4" y1="430.5" x2="136.6" y2="430.5" stroke="#1c1496" stroke-width="1.0" /><text x="54" y="381.51" font-family="Liberation Sans" font-style="italic" font-size="4.19" fill="#22c822" opacity="1.00" textLength="5" lengthAdjust="spacingAndGlyphs">Кол</text><text x="102" y="381.51" font-family="Liberation Sans" font-style="italic" font-size="4.19" fill="#22c822" opacity="1.00" textLength="6" lengthAdjust="spacingAndGlyphs">Масса</text><text x="56" y="399.01" font-family="Liberation Sans" font-style="italic" font-size="4.19" fill="#22c822" opacity="1.00" textLength="4" lengthAdjust="spacingAndGlyphs">5.40</text><text x="57" y="420.01" font-family="Liberation Sans" font-style="italic" font-size="4.19" fill="#22c822" opacity="1.00" textLength="4" lengthAdjust="spacingAndGlyphs">Поз</text><text x="56" y="441.51" font-family="Liberation Sans" font-style="italic" font-size="4.19" fill="#22c822" opacity="1.00" textLength="4" lengthAdjust="spacingAndGlyphs">L=860</text><line x1="73" y1="400.5" x2="91.8" y2="400.5" stroke="#d8140e" stroke-width="1.0" /><line x1="117" y1="400.5" x2="132.7" y2="400.5" stroke="#d8140e" stroke-width="1.0" /><line x1="91.8" y1="400.6" x2="95" y2="396.5" stroke="#f0f0f0" stroke-width="1.1" /><line x1="95" y1="396.5" x2="113.5" y2="396.5" stroke="#d8140e" stroke-width="1.0" /><line x1="113.5" y1="396.5" x2="117" y2="400.6" stroke="#f0f0f0" stroke-width="1.1" /><text x="100" y="394.94" font-family="Liberation Sans" font-style="italic" font-size="4.01" fill="#f0f0f0" opacity="1.00" textLength="7" lengthAdjust="spacingAndGlyphs">Ø10</text><text x="120" y="397.44" font-family="Liberation Sans" font-style="italic" font-size="4.01" fill="#22c822" opacity="1.00" textLength="5" lengthAdjust="spacingAndGlyphs">34028</text><text x="76" y="403.94" font-family="Liberation Sans" font-style="italic" font-size="4.01" fill="#22c822" opacity="1.00" textLength="5" lengthAdjust="spacingAndGlyphs">Наименование</text><text x="98" y="400.41" font-family="Liberation Sans" font-style="italic" font-size="3.92" fill="#22c822" opacity="1.00" textLength="10" lengthAdjust="spacingAndGlyphs">2.14</text><text x="124" y="403.94" font-family="Liberation Sans" font-style="italic" font-size="4.01" fill="#22c822" opacity="1.00" textLength="5" lengthAdjust="spacingAndGlyphs">Прим</text><line x1="74.5" y1="420.5" x2="134" y2="420.5" stroke="#d8140e" stroke-width="1.0" /><rect x="74.5" y="419.5" width="2.0" height="3.0" stroke="#f0f0f0" stroke-width="0.8" fill="none"/><text x="100" y="418.94" font-family="Liberation Sans" font-style="italic" font-size="4.01" fill="#f0f0f0" opacity="1.00" textLength="8" lengthAdjust="spacingAndGlyphs">Обозначение</text><circle cx="103.6" cy="442.8" r="7.7" stroke="#d8140e" stroke-width="1.1" fill="none"/><text x="100" y="434.94" font-family="Liberation Sans" font-style="italic" font-size="4.01" fill="#f0f0f0" opacity="1.00" textLength="4" lengthAdjust="spacingAndGlyphs">ГОСТ</text><line x1="137" y1="398.5" x2="139.5" y2="398.5" stroke="#f0f0f0" stroke-width="1.0" /><line x1="137" y1="404.5" x2="139.5" y2="404.5" stroke="#f0f0f0" stroke-width="1.0" /><line x1="137" y1="409.5" x2="139.5" y2="409.5" stroke="#f0f0f0" stroke-width="1.0" /><line x1="137" y1="414.5" x2="139.5" y2="414.5" stroke="#f0f0f0" stroke-width="1.0" /><line x1="137" y1="420.5" x2="139.5" y2="420.5" stroke="#f0f0f0" stroke-width="1.0" /><line x1="137" y1="425.5" x2="139.5" y2="425.5" stroke="#f0f0f0" stroke-width="1.0" /><line x1="137" y1="430.5" x2="139.5" y2="430.5" stroke="#f0f0f0" stroke-width="1.0" /><line x1="137" y1="436.5" x2="139.5" y2="436.5" stroke="#f0f0f0" stroke-width="1.0" /><line x1="137" y1="441.5" x2="139.5" y2="441.5" stroke="#f0f0f0" stroke-width="1.0" /><line x1="137" y1="446.5" x2="139.5" y2="446.5" stroke="#f0f0f0" stroke-width="1.0" /><line x1="137.5" y1="372" x2="137.5" y2="452.6" stroke="#1c1496" stroke-width="1.0" /></svg>
<div class="a" style="left:0px;top:836px;width:140px;height:36px;background:#f0f0f0"></div>
<div class="a" style="left:0px;top:836px;width:140px;height:2px;background:#fbfbfb"></div>
<div class="a" style="left:0px;top:863px;width:140px;height:2px;background:#fafafa"></div>
<div class="a" style="left:-8px;top:841px;width:20px;height:22px;background:#d5d5da"></div>
<svg class="a" style="left:-8px;top:843px" width="20" height="20" viewBox="0 0 20 20"><g fill="none" stroke="#2b2b2b" stroke-width="1.4"><path d="M4.5 4.5h11v11h-11z M4.5 4.5 L15.5 15.5 M15.5 4.5 L4.5 15.5" /></g></svg>
<div class="a" style="left:14px;top:841px;width:20px;height:22px;background:#d5d5da"></div>
<svg class="a" style="left:14px;top:843px" width="20" height="20" viewBox="0 0 20 20"><g fill="none" stroke="#2b2b2b" stroke-width="1.4"><path d="M4.5 4.5h11v11h-11z"/></g></svg>
<div class="a" style="left:36px;top:841px;width:20px;height:22px;background:#d5d5da"></div>
<svg class="a" style="left:36px;top:843px" width="20" height="20" viewBox="0 0 20 20"><g fill="none" stroke="#2b2b2b" stroke-width="1.4"><circle cx="10" cy="10" r="5.6"/></g></svg>
<div class="a" style="left:58px;top:841px;width:20px;height:22px;background:#d5d5da"></div>
<svg class="a" style="left:58px;top:843px" width="20" height="20" viewBox="0 0 20 20"><g fill="none" stroke="#2b2b2b" stroke-width="1.4"><path d="M10 6.2 L14 14.6 L6 14.6 Z"/></g></svg>
<div class="a" style="left:80px;top:841px;width:20px;height:22px;background:#d5d5da"></div>
<svg class="a" style="left:80px;top:843px" width="20" height="20" viewBox="0 0 20 20"><g fill="none" stroke="#2b2b2b" stroke-width="1.4"><path d="M4.5 4.5 L15.5 15.5 M15.5 4.5 L4.5 15.5"/></g></svg>
<div class="a" style="left:102px;top:841px;width:20px;height:22px;background:#d5d5da"></div>
<svg class="a" style="left:102px;top:843px" width="20" height="20" viewBox="0 0 20 20"><g fill="none" stroke="#2b2b2b" stroke-width="1.4"><path d="M15 4 V15 H4 M10 15 V11 H15"/></g></svg>
<div class="a" style="left:124px;top:841px;width:20px;height:22px;background:#d5d5da"></div>
<svg class="a" style="left:124px;top:843px" width="20" height="20" viewBox="0 0 20 20"><g fill="none" stroke="#2b2b2b" stroke-width="1.4"><path d="M6.2 4.8 H13.8 L10 10 L13.8 15.4 H6.2 L10 10 Z"/></g></svg>
<div class="a" style="left:139px;top:393px;width:1px;height:479px;background:#555"></div>
<div class="a" style="left:140px;top:393px;width:750px;height:479px;background:#f0f0f0"></div>
<div class="a" style="left:140px;top:393px;width:750px;height:30px;background:#fff"></div>
<svg class="a" style="left:146px;top:398px" width="20" height="17" viewBox="0 0 20 17">
<path d="M14.24 5.41 A3.9 3.9 0 1 0 14.76 11.36" stroke="#dc3c12" stroke-width="3.3" fill="none"/>
<path d="M12 3 L18 2 L16.6 5.6 L14 6.6 Z" fill="#dc3c12"/>
<rect x="13.3" y="8.1" width="2.7" height="1.8" fill="#d85030"/>
<path d="M7.4 3.4 Q4 7 4.8 13.4" stroke="#e4602e" stroke-width="1.3" fill="none"/>
<path d="M5.2 4.4 Q2.2 8 2.6 13" stroke="#f09464" stroke-width="1.1" fill="none"/>
</svg>
<div class="t" style="left:169.50px;top:402.18px;font-size:11.6px;color:#000;">Ведомость расхода стали v2.0</div>
<svg class="a" style="left:876px;top:402px" width="12" height="12" viewBox="0 0 12 12"><path d="M0.5 0.5 L11 11 M11 0.5 L0.5 11" stroke="#111" stroke-width="1.1" fill="none"/></svg>
<div class="a" style="left:140px;top:429px;width:750px;height:1px;background:#dadada"></div>
<div class="a" style="left:140px;top:430px;width:750px;height:1px;background:#f9f9f9"></div>
<div class="a" style="left:140px;top:464px;width:750px;height:1px;background:#dadada"></div>
<div class="a" style="left:140px;top:465px;width:750px;height:1px;background:#f9f9f9"></div>
<div class="btn" style="left:147px;top:435px;width:69px;height:21px"></div>
<div class="t" style="left:81.50px;top:439.52px;width:200px;text-align:center;font-size:11.2px;color:#000">Сохранить</div>
<div class="btn" style="left:224px;top:435px;width:65px;height:21px"></div>
<div class="t" style="left:156.50px;top:439.52px;width:200px;text-align:center;font-size:11.2px;color:#000">Загрузить</div>
<div class="a" style="left:296px;top:434px;width:212px;height:21px;background:#fff;border:1px solid #7a7a7a"></div>
<svg class="a" style="left:494px;top:441px" width="10" height="7" viewBox="0 0 10 7"><path d="M1 1.2 L5 5.2 L9 1.2" stroke="#333" stroke-width="1.1" fill="none"/></svg>
<div class="btn" style="left:515px;top:435px;width:89px;height:21px"></div>
<div class="t" style="left:459.50px;top:439.52px;width:200px;text-align:center;font-size:11.2px;color:#000">Сохранить как</div>
<div class="a" style="left:611px;top:434px;width:212px;height:20px;background:#fff;border:1px solid #7a7a7a"></div>
<div class="btn" style="left:830px;top:435px;width:57px;height:21px"></div>
<div class="t" style="left:758.50px;top:439.52px;width:200px;text-align:center;font-size:11.2px;color:#000">Справка</div>
<div class="a" style="left:144px;top:487px;width:746px;height:385px;background:#f0f0f0;border-top:1px solid #d9d9d9;border-left:1px solid #d9d9d9"></div>
<div class="a" style="left:145px;top:488px;width:745px;height:1px;background:#fcfcfc"></div>
<div class="a" style="left:220px;top:469px;width:90px;height:19px;background:#f0f0f0;border:1px solid #d9d9d9;border-bottom:none"></div>
<div class="a" style="left:142px;top:467px;width:79px;height:21px;background:#fff;border:1px solid #d9d9d9;border-bottom:none"></div>
<svg class="a" style="left:149px;top:469px" width="14" height="14" viewBox="0 0 14 14">
<rect x="0.5" y="0.5" width="13" height="13" fill="#eaf6fa" stroke="#6f7f95"/>
<rect x="1.5" y="1.5" width="11" height="2" fill="#9fb4c8"/>
<rect x="4" y="4" width="5" height="8.5" fill="#f2909e"/>
<path d="M1.5 6.2H12.5 M1.5 8.5H12.5 M1.5 10.8H12.5" stroke="#ffffff" stroke-width="0.7" opacity="0.8"/>
</svg>
<div class="t" style="left:171.20px;top:472.07px;font-size:10.9px;color:#000;">Таблица</div>
<svg class="a" style="left:225.5px;top:470px" width="15" height="16" viewBox="0 0 15 16">
<g fill="#77838f"><rect x="6.4" y="0.2" width="2.2" height="14.6" transform="rotate(0 7.5 7.8)"/><rect x="6.4" y="0.2" width="2.2" height="14.6" transform="rotate(30 7.5 7.8)"/><rect x="6.4" y="0.2" width="2.2" height="14.6" transform="rotate(60 7.5 7.8)"/><rect x="6.4" y="0.2" width="2.2" height="14.6" transform="rotate(90 7.5 7.8)"/><rect x="6.4" y="0.2" width="2.2" height="14.6" transform="rotate(120 7.5 7.8)"/><rect x="6.4" y="0.2" width="2.2" height="14.6" transform="rotate(150 7.5 7.8)"/><circle cx="7.5" cy="7.8" r="6"/></g>
<circle cx="7.5" cy="7.8" r="4.6" fill="#4f6ea8"/>
<circle cx="7.5" cy="7.8" r="2.8" fill="#86b4cc"/>
<path d="M7 6.2 L9.6 7.8 L7 9.4Z" fill="#fff"/>
<circle cx="6" cy="7.3" r="0.8" fill="#1e3050"/>
</svg>
<div class="t" style="left:247.00px;top:472.60px;font-size:11.1px;color:#000;">Параметры</div>
<div class="a" style="left:152px;top:501px;width:288px;height:38px;border:1px solid #dcdcdc"></div>
<div class="a" style="left:158px;top:496px;width:92px;height:12px;background:#f0f0f0"></div>
<div class="t" style="left:161.50px;top:496.69px;font-size:11.0px;color:#000;">Источник данных</div>
<div class="rb" style="left:158px;top:516px"></div>
<div class="t" style="left:175.50px;top:517.29px;font-size:11.0px;color:#000;">Вся модель</div>
<div class="rb" style="left:252px;top:516px"><div class="a" style="left:2px;top:2px;width:7px;height:7px;border-radius:50%;background:#333"></div></div>
<div class="t" style="left:269.00px;top:517.03px;font-size:11.3px;color:#000;">Детали с чертежа</div>
<div class="rb" style="left:387px;top:516px"></div>
<div class="t" style="left:404.00px;top:517.20px;font-size:11.1px;color:#000;">Auto</div>
<div class="a" style="left:152px;top:552px;width:288px;height:110px;border:1px solid #dcdcdc"></div>
<div class="a" style="left:158px;top:547px;width:88px;height:12px;background:#f0f0f0"></div>
<div class="t" style="left:160.50px;top:547.69px;font-size:11.0px;color:#000;">Состав таблицы</div>
<div class="cb" style="left:158px;top:567px"><svg class="a" style="left:0;top:0" width="13" height="13" viewBox="0 0 13 13"><path d="M2 5.6 L5.3 8.9 L11.2 3" fill="none" stroke="#333" stroke-width="1.35"/></svg></div>
<div class="t" style="left:175.50px;top:567.69px;font-size:11.0px;color:#000;">Изделия арматурные</div>
<div class="cb" style="left:299px;top:567px"></div>
<div class="t" style="left:316.50px;top:567.69px;font-size:11.0px;color:#000;">Песок</div>
<div class="cb" style="left:158px;top:590px"></div>
<div class="t" style="left:175.50px;top:590.69px;font-size:11.0px;color:#000;">Бетон</div>
<div class="cb" style="left:299px;top:590px"></div>
<div class="t" style="left:316.50px;top:590.69px;font-size:11.0px;color:#000;">Фундаментные болты</div>
<div class="cb" style="left:158px;top:613px"></div>
<div class="t" style="left:175.50px;top:613.69px;font-size:11.0px;color:#000;">Щебень</div>
<div class="cb" style="left:299px;top:613px"><svg class="a" style="left:0;top:0" width="13" height="13" viewBox="0 0 13 13"><path d="M2 5.6 L5.3 8.9 L11.2 3" fill="none" stroke="#333" stroke-width="1.35"/></svg></div>
<div class="t" style="left:316.50px;top:613.69px;font-size:11.0px;color:#000;">Закладные детали</div>
<div class="a" style="left:158px;top:634px;width:276px;height:2px;background:#a6a6a6"></div>
<div class="cb" style="left:158px;top:644px"></div>
<div class="t" style="left:175.50px;top:644.52px;font-size:11.2px;color:#000;">Строчка "Всего"</div>
<div class="t" style="left:161.50px;top:670.29px;font-size:11.0px;color:#000;">Какой класс бетона отображать?</div>
<div class="a" style="left:158px;top:687px;width:161px;height:182px;background:#fff;border:1px solid #000"></div>
<div class="a" style="left:159px;top:863px;width:159px;height:5px;background:#a3a3a3"></div>
<div class="a" style="left:184px;top:688px;width:1px;height:20px;background:#f0f0f0"></div>
<div class="t" style="left:192.50px;top:694.09px;font-size:11.0px;color:#000;">Класс бетона</div>
<div class="a" style="left:159px;top:708px;width:159px;height:1px;background:#a0a0a0"></div>
<div class="a" style="left:160px;top:709px;width:24px;height:21px;background:#0078d7"></div>
<div class="a" style="left:159px;top:730px;width:159px;height:1px;background:#a0a0a0"></div>
<div class="a" style="left:184px;top:709px;width:1px;height:21px;background:#a0a0a0"></div>
<div class="cb" style="left:165px;top:714px"><svg class="a" style="left:0;top:0" width="13" height="13" viewBox="0 0 13 13"><path d="M2 5.6 L5.3 8.9 L11.2 3" fill="none" stroke="#333" stroke-width="1.35"/></svg></div>
<div class="t" style="left:188.50px;top:714.19px;font-size:11.0px;color:#000;">B25</div>
<div class="a" style="left:159px;top:752px;width:159px;height:1px;background:#a0a0a0"></div>
<div class="a" style="left:184px;top:731px;width:1px;height:21px;background:#a0a0a0"></div>
<div class="cb" style="left:165px;top:736px"><svg class="a" style="left:0;top:0" width="13" height="13" viewBox="0 0 13 13"><path d="M2 5.6 L5.3 8.9 L11.2 3" fill="none" stroke="#333" stroke-width="1.35"/></svg></div>
<div class="t" style="left:188.50px;top:736.19px;font-size:11.0px;color:#000;">B20</div>
<div class="a" style="left:159px;top:774px;width:159px;height:1px;background:#a0a0a0"></div>
<div class="a" style="left:184px;top:753px;width:1px;height:21px;background:#a0a0a0"></div>
<div class="cb" style="left:165px;top:758px"><svg class="a" style="left:0;top:0" width="13" height="13" viewBox="0 0 13 13"><path d="M2 5.6 L5.3 8.9 L11.2 3" fill="none" stroke="#333" stroke-width="1.35"/></svg></div>
<div class="t" style="left:188.50px;top:758.19px;font-size:11.0px;color:#000;">B15</div>
<div class="a" style="left:159px;top:796px;width:159px;height:1px;background:#a0a0a0"></div>
<div class="a" style="left:184px;top:775px;width:1px;height:21px;background:#a0a0a0"></div>
<div class="cb" style="left:165px;top:780px"><svg class="a" style="left:0;top:0" width="13" height="13" viewBox="0 0 13 13"><path d="M2 5.6 L5.3 8.9 L11.2 3" fill="none" stroke="#333" stroke-width="1.35"/></svg></div>
<div class="t" style="left:188.50px;top:780.19px;font-size:11.0px;color:#000;">B7,5</div>
<div class="a" style="left:159px;top:818px;width:159px;height:1px;background:#a0a0a0"></div>
<div class="a" style="left:184px;top:797px;width:1px;height:21px;background:#a0a0a0"></div>
<div class="cb" style="left:165px;top:802px"><svg class="a" style="left:0;top:0" width="13" height="13" viewBox="0 0 13 13"><path d="M2 5.6 L5.3 8.9 L11.2 3" fill="none" stroke="#333" stroke-width="1.35"/></svg></div>
<div class="t" style="left:188.50px;top:802.19px;font-size:11.0px;color:#000;">B3,5</div>
<div class="a" style="left:159px;top:840px;width:159px;height:1px;background:#a0a0a0"></div>
<div class="a" style="left:184px;top:819px;width:1px;height:21px;background:#a0a0a0"></div>
<div class="cb" style="left:165px;top:824px"><svg class="a" style="left:0;top:0" width="13" height="13" viewBox="0 0 13 13"><path d="M2 5.6 L5.3 8.9 L11.2 3" fill="none" stroke="#333" stroke-width="1.35"/></svg></div>
<div class="t" style="left:188.50px;top:824.19px;font-size:11.0px;color:#000;">Кирпич керамический</div>
<div class="a" style="left:159px;top:862px;width:159px;height:1px;background:#a0a0a0"></div>
<div class="a" style="left:184px;top:841px;width:1px;height:21px;background:#a0a0a0"></div>
<div class="cb" style="left:165px;top:846px"><svg class="a" style="left:0;top:0" width="13" height="13" viewBox="0 0 13 13"><path d="M2 5.6 L5.3 8.9 L11.2 3" fill="none" stroke="#333" stroke-width="1.35"/></svg></div>
<div class="t" style="left:188.50px;top:846.19px;font-size:11.0px;color:#000;">Минвата</div>
<div class="cb" style="left:451px;top:501px"></div>
<div class="t" style="left:474.00px;top:494.95px;font-size:11.4px;color:#000;">Добавление щебня и песка к марке в таблице</div>
<div class="t" style="left:474.00px;top:507.22px;font-size:11.2px;color:#000;">Пишется марка/объем щебня/объем песка</div>
<div class="a" style="left:447px;top:529px;width:426px;height:340px;background:#fff;border:1px solid #000"></div>
<div class="a" style="left:473px;top:530px;width:1px;height:20px;background:#e8e8e8"></div>
<div class="a" style="left:599px;top:530px;width:1px;height:20px;background:#e8e8e8"></div>
<div class="a" style="left:726px;top:530px;width:1px;height:20px;background:#e8e8e8"></div>
<div class="cb" style="left:454px;top:534px"><svg class="a" style="left:0;top:0" width="13" height="13" viewBox="0 0 13 13"><path d="M2 5.6 L5.3 8.9 L11.2 3" fill="none" stroke="#333" stroke-width="1.35"/></svg></div>
<div class="t" style="left:485.50px;top:536.09px;font-size:11.0px;color:#000;">Марка элемента</div>
<div class="t" style="left:553.80px;top:536.26px;width:200px;text-align:center;font-size:10.8px;color:#000">Щебень</div>
<div class="t" style="left:681.00px;top:536.09px;width:200px;text-align:center;font-size:11.0px;color:#000">Песок</div>
<div class="a" style="left:448px;top:550px;width:407px;height:1px;background:#a0a0a0"></div>
<div class="a" style="left:448px;top:551px;width:25px;height:21px;background:#0078d7"></div>
<div class="a" style="left:448px;top:572px;width:407px;height:1px;background:#a0a0a0"></div>
<div class="a" style="left:473px;top:551px;width:1px;height:22px;background:#a0a0a0"></div>
<div class="a" style="left:599px;top:551px;width:1px;height:22px;background:#a0a0a0"></div>
<div class="a" style="left:726px;top:551px;width:1px;height:22px;background:#a0a0a0"></div>
<div class="a" style="left:854px;top:551px;width:1px;height:22px;background:#a0a0a0"></div>
<div class="cb" style="left:454px;top:556px"><svg class="a" style="left:0;top:0" width="13" height="13" viewBox="0 0 13 13"><path d="M2 5.6 L5.3 8.9 L11.2 3" fill="none" stroke="#333" stroke-width="1.35"/></svg></div>
<div class="t" style="left:436.00px;top:556.52px;width:200px;text-align:center;font-size:10.6px;color:#000">Сб-1</div>
<div class="a" style="left:448px;top:594px;width:407px;height:1px;background:#a0a0a0"></div>
<div class="a" style="left:473px;top:573px;width:1px;height:22px;background:#a0a0a0"></div>
<div class="a" style="left:599px;top:573px;width:1px;height:22px;background:#a0a0a0"></div>
<div class="a" style="left:726px;top:573px;width:1px;height:22px;background:#a0a0a0"></div>
<div class="a" style="left:854px;top:573px;width:1px;height:22px;background:#a0a0a0"></div>
<div class="cb" style="left:454px;top:578px"><svg class="a" style="left:0;top:0" width="13" height="13" viewBox="0 0 13 13"><path d="M2 5.6 L5.3 8.9 L11.2 3" fill="none" stroke="#333" stroke-width="1.35"/></svg></div>
<div class="t" style="left:436.00px;top:578.52px;width:200px;text-align:center;font-size:10.6px;color:#000">Сб-2</div>
<div class="a" style="left:448px;top:616px;width:407px;height:1px;background:#a0a0a0"></div>
<div class="a" style="left:473px;top:595px;width:1px;height:22px;background:#a0a0a0"></div>
<div class="a" style="left:599px;top:595px;width:1px;height:22px;background:#a0a0a0"></div>
<div class="a" style="left:726px;top:595px;width:1px;height:22px;background:#a0a0a0"></div>
<div class="a" style="left:854px;top:595px;width:1px;height:22px;background:#a0a0a0"></div>
<div class="cb" style="left:454px;top:600px"><svg class="a" style="left:0;top:0" width="13" height="13" viewBox="0 0 13 13"><path d="M2 5.6 L5.3 8.9 L11.2 3" fill="none" stroke="#333" stroke-width="1.35"/></svg></div>
<div class="t" style="left:436.00px;top:600.52px;width:200px;text-align:center;font-size:10.6px;color:#000">Сб-3</div>
<div class="a" style="left:448px;top:638px;width:407px;height:1px;background:#a0a0a0"></div>
<div class="a" style="left:473px;top:617px;width:1px;height:22px;background:#a0a0a0"></div>
<div class="a" style="left:599px;top:617px;width:1px;height:22px;background:#a0a0a0"></div>
<div class="a" style="left:726px;top:617px;width:1px;height:22px;background:#a0a0a0"></div>
<div class="a" style="left:854px;top:617px;width:1px;height:22px;background:#a0a0a0"></div>
<div class="cb" style="left:454px;top:622px"><svg class="a" style="left:0;top:0" width="13" height="13" viewBox="0 0 13 13"><path d="M2 5.6 L5.3 8.9 L11.2 3" fill="none" stroke="#333" stroke-width="1.35"/></svg></div>
<div class="t" style="left:436.00px;top:622.52px;width:200px;text-align:center;font-size:10.6px;color:#000">Сб-4</div>
<div class="a" style="left:448px;top:660px;width:407px;height:1px;background:#a0a0a0"></div>
<div class="a" style="left:473px;top:639px;width:1px;height:22px;background:#a0a0a0"></div>
<div class="a" style="left:599px;top:639px;width:1px;height:22px;background:#a0a0a0"></div>
<div class="a" style="left:726px;top:639px;width:1px;height:22px;background:#a0a0a0"></div>
<div class="a" style="left:854px;top:639px;width:1px;height:22px;background:#a0a0a0"></div>
<div class="cb" style="left:454px;top:644px"><svg class="a" style="left:0;top:0" width="13" height="13" viewBox="0 0 13 13"><path d="M2 5.6 L5.3 8.9 L11.2 3" fill="none" stroke="#333" stroke-width="1.35"/></svg></div>
<div class="t" style="left:436.00px;top:644.52px;width:200px;text-align:center;font-size:10.6px;color:#000">Сб-5</div>
<div class="a" style="left:448px;top:682px;width:407px;height:1px;background:#a0a0a0"></div>
<div class="a" style="left:473px;top:661px;width:1px;height:22px;background:#a0a0a0"></div>
<div class="a" style="left:599px;top:661px;width:1px;height:22px;background:#a0a0a0"></div>
<div class="a" style="left:726px;top:661px;width:1px;height:22px;background:#a0a0a0"></div>
<div class="a" style="left:854px;top:661px;width:1px;height:22px;background:#a0a0a0"></div>
<div class="cb" style="left:454px;top:666px"><svg class="a" style="left:0;top:0" width="13" height="13" viewBox="0 0 13 13"><path d="M2 5.6 L5.3 8.9 L11.2 3" fill="none" stroke="#333" stroke-width="1.35"/></svg></div>
<div class="t" style="left:436.00px;top:666.52px;width:200px;text-align:center;font-size:10.6px;color:#000">Сб-6</div>
<div class="a" style="left:448px;top:704px;width:407px;height:1px;background:#a0a0a0"></div>
<div class="a" style="left:473px;top:683px;width:1px;height:22px;background:#a0a0a0"></div>
<div class="a" style="left:599px;top:683px;width:1px;height:22px;background:#a0a0a0"></div>
<div class="a" style="left:726px;top:683px;width:1px;height:22px;background:#a0a0a0"></div>
<div class="a" style="left:854px;top:683px;width:1px;height:22px;background:#a0a0a0"></div>
<div class="cb" style="left:454px;top:688px"><svg class="a" style="left:0;top:0" width="13" height="13" viewBox="0 0 13 13"><path d="M2 5.6 L5.3 8.9 L11.2 3" fill="none" stroke="#333" stroke-width="1.35"/></svg></div>
<div class="t" style="left:436.00px;top:688.52px;width:200px;text-align:center;font-size:10.6px;color:#000">Сб-7</div>
<div class="a" style="left:448px;top:726px;width:407px;height:1px;background:#a0a0a0"></div>
<div class="a" style="left:473px;top:705px;width:1px;height:22px;background:#a0a0a0"></div>
<div class="a" style="left:599px;top:705px;width:1px;height:22px;background:#a0a0a0"></div>
<div class="a" style="left:726px;top:705px;width:1px;height:22px;background:#a0a0a0"></div>
<div class="a" style="left:854px;top:705px;width:1px;height:22px;background:#a0a0a0"></div>
<div class="cb" style="left:454px;top:710px"><svg class="a" style="left:0;top:0" width="13" height="13" viewBox="0 0 13 13"><path d="M2 5.6 L5.3 8.9 L11.2 3" fill="none" stroke="#333" stroke-width="1.35"/></svg></div>
<div class="t" style="left:436.00px;top:710.52px;width:200px;text-align:center;font-size:10.6px;color:#000">Сб-8</div>
<div class="a" style="left:448px;top:748px;width:407px;height:1px;background:#a0a0a0"></div>
<div class="a" style="left:473px;top:727px;width:1px;height:22px;background:#a0a0a0"></div>
<div class="a" style="left:599px;top:727px;width:1px;height:22px;background:#a0a0a0"></div>
<div class="a" style="left:726px;top:727px;width:1px;height:22px;background:#a0a0a0"></div>
<div class="a" style="left:854px;top:727px;width:1px;height:22px;background:#a0a0a0"></div>
<div class="cb" style="left:454px;top:732px"><svg class="a" style="left:0;top:0" width="13" height="13" viewBox="0 0 13 13"><path d="M2 5.6 L5.3 8.9 L11.2 3" fill="none" stroke="#333" stroke-width="1.35"/></svg></div>
<div class="t" style="left:436.00px;top:732.52px;width:200px;text-align:center;font-size:10.6px;color:#000">Сб-9</div>
<div class="a" style="left:448px;top:770px;width:407px;height:1px;background:#a0a0a0"></div>
<div class="a" style="left:473px;top:749px;width:1px;height:22px;background:#a0a0a0"></div>
<div class="a" style="left:599px;top:749px;width:1px;height:22px;background:#a0a0a0"></div>
<div class="a" style="left:726px;top:749px;width:1px;height:22px;background:#a0a0a0"></div>
<div class="a" style="left:854px;top:749px;width:1px;height:22px;background:#a0a0a0"></div>
<div class="cb" style="left:454px;top:754px"><svg class="a" style="left:0;top:0" width="13" height="13" viewBox="0 0 13 13"><path d="M2 5.6 L5.3 8.9 L11.2 3" fill="none" stroke="#333" stroke-width="1.35"/></svg></div>
<div class="t" style="left:436.00px;top:754.52px;width:200px;text-align:center;font-size:10.6px;color:#000">Сб-10</div>
<div class="a" style="left:448px;top:792px;width:407px;height:1px;background:#a0a0a0"></div>
<div class="a" style="left:473px;top:771px;width:1px;height:22px;background:#a0a0a0"></div>
<div class="a" style="left:599px;top:771px;width:1px;height:22px;background:#a0a0a0"></div>
<div class="a" style="left:726px;top:771px;width:1px;height:22px;background:#a0a0a0"></div>
<div class="a" style="left:854px;top:771px;width:1px;height:22px;background:#a0a0a0"></div>
<div class="cb" style="left:454px;top:776px"><svg class="a" style="left:0;top:0" width="13" height="13" viewBox="0 0 13 13"><path d="M2 5.6 L5.3 8.9 L11.2 3" fill="none" stroke="#333" stroke-width="1.35"/></svg></div>
<div class="t" style="left:436.00px;top:776.52px;width:200px;text-align:center;font-size:10.6px;color:#000">0-0(?)</div>
<div class="a" style="left:448px;top:814px;width:407px;height:1px;background:#a0a0a0"></div>
<div class="a" style="left:473px;top:793px;width:1px;height:22px;background:#a0a0a0"></div>
<div class="a" style="left:599px;top:793px;width:1px;height:22px;background:#a0a0a0"></div>
<div class="a" style="left:726px;top:793px;width:1px;height:22px;background:#a0a0a0"></div>
<div class="a" style="left:854px;top:793px;width:1px;height:22px;background:#a0a0a0"></div>
<div class="cb" style="left:454px;top:798px"><svg class="a" style="left:0;top:0" width="13" height="13" viewBox="0 0 13 13"><path d="M2 5.6 L5.3 8.9 L11.2 3" fill="none" stroke="#333" stroke-width="1.35"/></svg></div>
<div class="t" style="left:436.00px;top:798.52px;width:200px;text-align:center;font-size:10.6px;color:#000">0-6(?)</div>
<div class="a" style="left:448px;top:836px;width:407px;height:1px;background:#a0a0a0"></div>
<div class="a" style="left:473px;top:815px;width:1px;height:22px;background:#a0a0a0"></div>
<div class="a" style="left:599px;top:815px;width:1px;height:22px;background:#a0a0a0"></div>
<div class="a" style="left:726px;top:815px;width:1px;height:22px;background:#a0a0a0"></div>
<div class="a" style="left:854px;top:815px;width:1px;height:22px;background:#a0a0a0"></div>
<div class="cb" style="left:454px;top:820px"><svg class="a" style="left:0;top:0" width="13" height="13" viewBox="0 0 13 13"><path d="M2 5.6 L5.3 8.9 L11.2 3" fill="none" stroke="#333" stroke-width="1.35"/></svg></div>
<div class="t" style="left:436.00px;top:820.52px;width:200px;text-align:center;font-size:10.6px;color:#000">ПСтм-1</div>
<div class="a" style="left:448px;top:858px;width:407px;height:1px;background:#a0a0a0"></div>
<div class="a" style="left:473px;top:837px;width:1px;height:22px;background:#a0a0a0"></div>
<div class="a" style="left:599px;top:837px;width:1px;height:22px;background:#a0a0a0"></div>
<div class="a" style="left:726px;top:837px;width:1px;height:22px;background:#a0a0a0"></div>
<div class="a" style="left:854px;top:837px;width:1px;height:22px;background:#a0a0a0"></div>
<div class="cb" style="left:454px;top:842px"><svg class="a" style="left:0;top:0" width="13" height="13" viewBox="0 0 13 13"><path d="M2 5.6 L5.3 8.9 L11.2 3" fill="none" stroke="#333" stroke-width="1.35"/></svg></div>
<div class="t" style="left:436.00px;top:842.52px;width:200px;text-align:center;font-size:10.6px;color:#000">ПСтм-2</div>
<div class="a" style="left:473px;top:859px;width:1px;height:9px;background:#a0a0a0"></div>
<div class="a" style="left:599px;top:859px;width:1px;height:9px;background:#a0a0a0"></div>
<div class="a" style="left:726px;top:859px;width:1px;height:9px;background:#a0a0a0"></div>
<div class="a" style="left:854px;top:859px;width:1px;height:9px;background:#a0a0a0"></div>
<div class="cb" style="left:454px;top:864px"><svg class="a" style="left:0;top:0" width="13" height="13" viewBox="0 0 13 13"><path d="M2 5.6 L5.3 8.9 L11.2 3" fill="none" stroke="#333" stroke-width="1.35"/></svg></div>
<div class="t" style="left:436.00px;top:864.52px;width:200px;text-align:center;font-size:10.6px;color:#000">ПСтм-3</div>
<div class="a" style="left:440px;top:869px;width:450px;height:3px;background:#f0f0f0"></div>
<div class="a" style="left:447px;top:868px;width:426px;height:1px;background:#000"></div>
<div class="a" style="left:872px;top:529px;width:1px;height:340px;background:#000"></div>
<div class="a" style="left:855px;top:530px;width:17px;height:338px;background:#f0f0f0"></div>
<div class="a" style="left:856px;top:547px;width:15px;height:243px;background:#cdcdcd"></div>
<svg class="a" style="left:859px;top:535px" width="10" height="8" viewBox="0 0 10 8"><path d="M1.2 6.2 L5 2.4 L8.8 6.2" stroke="#606060" stroke-width="2" fill="none"/></svg>
<svg class="a" style="left:859px;top:856px" width="10" height="8" viewBox="0 0 10 8"><path d="M1.2 1.8 L5 5.6 L8.8 1.8" stroke="#606060" stroke-width="2" fill="none"/></svg>
</body></html>
